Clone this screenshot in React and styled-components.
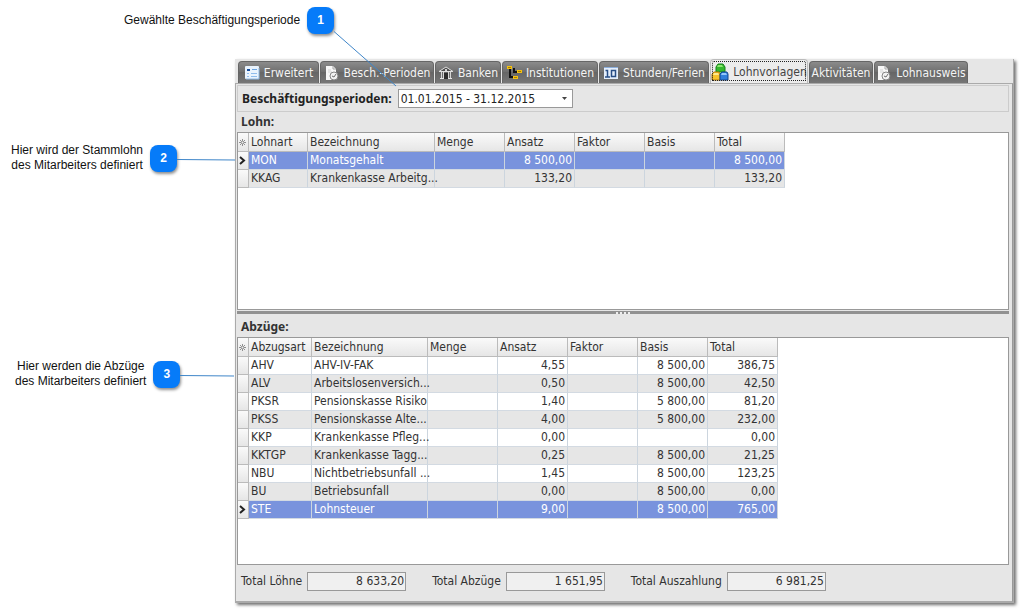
import { useState } from "react"
import styled, { createGlobalStyle } from "styled-components"

// dados

const spaltenLohn = [
    { titel: "Lohnart", breite: 59 },
    { titel: "Bezeichnung", breite: 127 },
    { titel: "Menge", breite: 70 },
    { titel: "Ansatz", breite: 70 },
    { titel: "Faktor", breite: 70 },
    { titel: "Basis", breite: 70 },
    { titel: "Total", breite: 70 },
]

const spaltenAbzuege = [
    { titel: "Abzugsart", breite: 63 },
    { titel: "Bezeichnung", breite: 116 },
    { titel: "Menge", breite: 70 },
    { titel: "Ansatz", breite: 70 },
    { titel: "Faktor", breite: 70 },
    { titel: "Basis", breite: 70 },
    { titel: "Total", breite: 70 },
]

const zeilenLohn = [
    ["MON", "Monatsgehalt", "", "8 500,00", "", "", "8 500,00"],
    ["KKAG", "Krankenkasse Arbeitg...", "", "133,20", "", "", "133,20"],
]

const zeilenAbzuege = [
    ["AHV", "AHV-IV-FAK", "", "4,55", "", "8 500,00", "386,75"],
    ["ALV", "Arbeitslosenversich...", "", "0,50", "", "8 500,00", "42,50"],
    ["PKSR", "Pensionskasse Risiko", "", "1,40", "", "5 800,00", "81,20"],
    ["PKSS", "Pensionskasse Alte...", "", "4,00", "", "5 800,00", "232,00"],
    ["KKP", "Krankenkasse Pfleg...", "", "0,00", "", "", "0,00"],
    ["KKTGP", "Krankenkasse Tagg...", "", "0,25", "", "8 500,00", "21,25"],
    ["NBU", "Nichtbetriebsunfall ...", "", "1,45", "", "8 500,00", "123,25"],
    ["BU", "Betriebsunfall", "", "0,00", "", "8 500,00", "0,00"],
    ["STE", "Lohnsteuer", "", "9,00", "", "8 500,00", "765,00"],
]

const summen = [
    { id: "loehne", titel: "Total Löhne", wert: "8 633,20" },
    { id: "abzuege", titel: "Total Abzüge", wert: "1 651,95" },
    { id: "auszahlung", titel: "Total Auszahlung", wert: "6 981,25" },
]

// icons

function IconListe() {
    return (
        <svg width="16" height="16" viewBox="0 0 16 16">
            <rect x="1" y="1" width="14" height="13" rx="1" fill="#e9f3fd" />
            <path d="M2 14h13V3" stroke="#8fb9e4" fill="none" />
            <path d="M3 4h3v2H3z" fill="#164d9c" />
            <path d="M8 4.500h5" stroke="#6aa3e0" />
            <path d="M3 8.500h2M7 8.500h6M3 11.500h2M7 11.500h6" stroke="#8fbcec" />
        </svg>
    )
}

function IconDokument() {
    return (
        <svg width="16" height="16" viewBox="0 0 16 16">
            <path d="M2 1h7l3 3v11H2z" fill="#f7f7f7" />
            <path d="M9 1v3h3" fill="none" stroke="#a5a5a5" />
            <path d="M4 5h3M4 7h4" stroke="#d5d5d5" />
            <circle cx="10" cy="11" r="4" fill="#f2f2f2" stroke="#858585" />
            <path d="M8 11l2 1 2-3" fill="none" stroke="#6f6f6f" />
        </svg>
    )
}

function IconBank() {
    return (
        <svg width="16" height="16" viewBox="0 0 16 16">
            <path d="M1 6.500L8 2l7 4.500z" fill="#4c4c4c" stroke="#dedede" />
            <circle cx="8" cy="5" r="1" fill="#fff" />
            <path d="M3.500 7v6M5.500 7v6M10.500 7v6M12.500 7v6" stroke="#d5d5d5" />
            <path d="M6 8h4v6H6z" fill="#2b2b2b" />
            <path d="M2 13.500h4M10 13.500h4" stroke="#e5e5e5" />
        </svg>
    )
}

function IconBaum() {
    return (
        <svg width="16" height="16" viewBox="0 0 16 16">
            <path d="M4 4v8h5M8 3v4h5" fill="none" stroke="#111" strokeWidth="2" />
            <rect x="1" y="1" width="5" height="3" fill="#f5c211" />
            <rect x="11" y="5" width="5" height="3" fill="#f5c211" />
            <rect x="7" y="11" width="5" height="3" fill="#f5c211" />
            <path d="M2 2.500h3M12 6.500h3M8 12.500h3" stroke="#a87c00" />
        </svg>
    )
}

function IconKalender() {
    return (
        <svg width="16" height="16" viewBox="0 0 16 16">
            <rect x="1" y="2" width="14" height="12" fill="#e4eefb" />
            <path d="M1 2.500h14" stroke="#8caedb" />
            <path d="M2.500 5.500h2v6M2 12h5" fill="none" stroke="#274d85" strokeWidth="1.500" />
            <rect x="8.500" y="5.500" width="4" height="6" fill="none" stroke="#274d85" strokeWidth="1.500" />
        </svg>
    )
}

function IconBausteine() {
    return (
        <svg width="18" height="18" viewBox="0 0 18 18">
            <path d="M5 4l2-3h5l2 3v5H5z" fill="#35b82d" stroke="#14811a" />
            <path d="M7 2h4l1 2H6z" fill="#8be870" />
            <path d="M1 11l2-2h5l1 2v6H1z" fill="#f8c32b" stroke="#bb7d09" />
            <path d="M3 10h4l1 2H2z" fill="#ffe98f" />
            <path d="M9 11l2-2h5l1 2v6H9z" fill="#317fda" stroke="#12478f" />
            <path d="M11 10h4l1 2h-6z" fill="#92c8fb" />
        </svg>
    )
}

const reiter = [
    { titel: "Erweitert", icon: <IconListe />, breite: 81 },
    { titel: "Besch.-Perioden", icon: <IconDokument />, breite: 114 },
    { titel: "Banken", icon: <IconBank />, breite: 66 },
    { titel: "Institutionen", icon: <IconBaum />, breite: 96 },
    { titel: "Stunden/Ferien", icon: <IconKalender />, breite: 110 },
    { titel: "Lohnvorlagen", icon: <IconBausteine />, breite: 98 },
    { titel: "Aktivitäten", breite: 64 },
    { titel: "Lohnausweis", icon: <IconDokument />, breite: 94 },
]

// componentes

function Hinweis({ nummer, dx, dy, children }) {
    return (
        <HinweisStyle>
            <p>{children}</p>
            <Marke>
                {nummer}
                <Linie width={dx} height={Math.max(dy, 2)} $oben={dy > 2 ? 24 : 14}>
                    <line x1="0" y1="0.5" x2={dx} y2={dy} />
                </Linie>
            </Marke>
        </HinweisStyle>
    )
}

function Tabelle({ name, spalten, zeilen, aktiv, setAktiv }) {
    return (
        <TabelleStyle aria-label={name}>
            <colgroup>
                <col width={11} />
                {spalten.map((spalte) => <col key={spalte.titel} width={spalte.breite} />)}
            </colgroup>
            <thead>
                <tr>
                    <th className="griff">
                        <svg width="7" height="7" viewBox="0 0 7 7">
                            <path d="M3.500 0v7M0 3.500h7M1 1l5 5M6 1l-5 5" stroke="#666" strokeWidth="0.7" />
                            <circle cx="3.500" cy="3.500" r="1" fill="#eee" />
                        </svg>
                    </th>
                    {spalten.map((spalte) => <th key={spalte.titel}>{spalte.titel}</th>)}
                </tr>
            </thead>
            <tbody>
                {zeilen.map((zeile, index) => (
                    <Zeile key={zeile[0]} $aktiv={index === aktiv} onClick={() => setAktiv(index)}>
                        <td className="griff">
                            {index === aktiv && (
                                <svg width="7" height="9" viewBox="0 0 7 9">
                                    <path d="M1 1l4 3.500-4 3.500" fill="none" stroke="#222" strokeWidth="2" />
                                </svg>
                            )}
                        </td>
                        {zeile.map((wert, i) => <td key={i} className={i > 1 ? "zahl" : ""}>{wert}</td>)}
                    </Zeile>
                ))}
            </tbody>
        </TabelleStyle>
    )
}

export default function App() {

    // states
    const [reiterAktiv, setReiterAktiv] = useState(5)
    const [lohnAktiv, setLohnAktiv] = useState(0)
    const [abzugAktiv, setAbzugAktiv] = useState(8)

    return (
        <Seite>
            <GlobalStyle />
            <Kopf>
                <Hinweis nummer={1} dx={62} dy={55}>Gewählte Beschäftigungsperiode</Hinweis>
            </Kopf>
            <Inhalt>
                <Randspalte>
                    <Hinweis nummer={2} dx={58} dy={1}>Hier wird der Stammlohn<br />des Mitarbeiters definiert</Hinweis>
                    <Hinweis nummer={3} dx={54} dy={1}>Hier werden die Abzüge<br />des Mitarbeiters definiert</Hinweis>
                </Randspalte>
                <Fenster>
                    <Reiterleiste role="tablist">
                        {reiter.map(({ titel, icon, breite }, index) => (
                            <Reiter
                                key={titel}
                                role="tab"
                                aria-selected={index === reiterAktiv}
                                $aktiv={index === reiterAktiv}
                                $breite={breite}
                                onClick={() => setReiterAktiv(index)}
                            >
                                {icon}
                                <span>{titel}</span>
                            </Reiter>
                        ))}
                    </Reiterleiste>
                    <Blatt>
                        <Periode>
                            <label htmlFor="periode">Beschäftigungsperioden:</label>
                            <Auswahl>
                                <select id="periode">
                                    <option>01.01.2015 - 31.12.2015</option>
                                </select>
                                <svg width="5" height="3" viewBox="0 0 5 3"><path d="M0 0h5L2.500 3z" fill="#444" /></svg>
                            </Auswahl>
                        </Periode>
                        <Titel>Lohn:</Titel>
                        <Rahmen $anteil={179}>
                            <Tabelle name="Lohn" spalten={spaltenLohn} zeilen={zeilenLohn} aktiv={lohnAktiv} setAktiv={setLohnAktiv} />
                        </Rahmen>
                        <Teiler><i /><i /><i /><i /></Teiler>
                        <Titel>Abzüge:</Titel>
                        <Rahmen $anteil={229}>
                            <Tabelle name="Abzüge" spalten={spaltenAbzuege} zeilen={zeilenAbzuege} aktiv={abzugAktiv} setAktiv={setAbzugAktiv} />
                        </Rahmen>
                        <Summen>
                            {summen.map(({ id, titel, wert }) => (
                                <Summe key={id}>
                                    <label htmlFor={id}>{titel}</label>
                                    <input id={id} value={wert} readOnly />
                                </Summe>
                            ))}
                        </Summen>
                    </Blatt>
                </Fenster>
            </Inhalt>
        </Seite>
    )
}

const GlobalStyle = createGlobalStyle`
    *{
        box-sizing: border-box;
    }

    body{
        margin: 0;
        background-color: white;
        color: #333;
        font-family: "DejaVu Sans Condensed", "DejaVu Sans", sans-serif;
        font-size: 12px;
    }

    button, input, select{
        font: inherit;
        color: inherit;
    }

    p, h2{
        margin: 0;
    }
`

const Seite = styled.div`
    display: flex;
    flex-direction: column;
    min-height: 100vh;
    padding: 0 10px 8px 0;
`

const Kopf = styled.header`
    height: 59px;
    padding: 7px 0 0 124px;
`

const Inhalt = styled.div`
    display: flex;
    flex: 1;
`

const Randspalte = styled.aside`
    display: flex;
    flex-direction: column;
    gap: 186px;
    width: 235px;
    padding: 84px 0 0 11px;

    div + div{
        padding-left: 4px;
    }
`

const HinweisStyle = styled.div`
    display: flex;
    align-items: center;
    gap: 7px;
    color: #111;
    font-family: "Liberation Sans", Arial, sans-serif;
    font-size: 12px;
    line-height: 15px;
    text-align: center;
    white-space: nowrap;
`

const Marke = styled.span`
    position: relative;
    display: flex;
    align-items: center;
    justify-content: center;
    width: 27px;
    height: 27px;
    border-radius: 8px;
    background-color: #067bf9;
    box-shadow: 1px 2px 3px #00000070;
    color: white;
    font-weight: 700;
`

const Linie = styled.svg`
    position: absolute;
    z-index: 1;
    left: 100%;
    top: ${({ $oben }) => $oben}px;
    overflow: visible;
    stroke: #3f86c9;
    pointer-events: none;
`

const Fenster = styled.main`
    display: flex;
    flex-direction: column;
    flex: 1;
    min-width: 0;
    background-color: #e6e6e6;
    border-right: 1px solid #aaa;
    border-bottom: 1px solid #aaa;
    box-shadow: 2px 2px 3px #00000090;
`

const Reiterleiste = styled.div`
    display: flex;
    align-items: flex-end;
    gap: 1px;
    height: 24px;
    padding-left: 3px;
`

const Reiter = styled.button`
    display: flex;
    align-items: center;
    justify-content: center;
    gap: 4px;
    width: ${({ $breite }) => $breite}px;
    height: ${({ $aktiv }) => ($aktiv ? 24 : 22)}px;
    padding: 0;
    border: 1px solid ${({ $aktiv }) => ($aktiv ? "#bbb" : "#666")};
    border-bottom: none;
    border-radius: 4px 4px 0 0;
    background: ${({ $aktiv }) => ($aktiv ? "#ececec" : "linear-gradient(#8b8b8b, #707070 45%, #666 50%, #777)")};
    color: ${({ $aktiv }) => ($aktiv ? "#444" : "#f4f4f4")};
    outline: ${({ $aktiv }) => ($aktiv ? "1px dotted #222" : "none")};
    outline-offset: -3px;
    white-space: nowrap;

    svg{
        flex: none;
    }
`

const Blatt = styled.section`
    display: flex;
    flex-direction: column;
    flex: 1;
    padding: 1px 3px 0 1px;
    border: 1px solid #aaa;
    border-right-color: #999;
`

const Periode = styled.div`
    display: flex;
    align-items: center;
    gap: 6px;
    height: 27px;
    padding-left: 4px;
    border: 1px solid #ccc;
    color: #222;

    label{
        font-family: "Noto Sans", sans-serif;
        font-weight: 700;
    }
`

const Auswahl = styled.div`
    display: grid;
    align-items: center;
    width: 175px;

    select, svg{
        grid-area: 1 / 1;
    }

    select{
        appearance: none;
        height: 19px;
        padding: 0 2px;
        border: 1px solid #999;
        border-radius: 0;
        background-color: white;
    }

    svg{
        justify-self: end;
        margin-right: 6px;
        pointer-events: none;
    }
`

const Titel = styled.h2`
    padding: 0 4px;
    font-family: "Noto Sans", sans-serif;
    font-size: 12px;
    line-height: 20px;
`

const Rahmen = styled.div`
    flex: ${({ $anteil }) => $anteil} 0 0;
    border: 1px solid #999;
    background-color: white;
`

const Teiler = styled.div`
    display: flex;
    align-items: center;
    justify-content: center;
    gap: 2px;
    height: 3px;
    margin: 1px 0 3px;
    background-color: #919191;

    i{
        width: 2px;
        height: 2px;
        background-color: #eee;
    }
`

const TabelleStyle = styled.table`
    table-layout: fixed;
    width: 0;
    border-collapse: separate;
    border-spacing: 0;
    line-height: 17px;
    white-space: nowrap;

    th, td{
        height: 18px;
        padding: 0 2px;
        border-right: 1px solid #ccd5de;
        border-bottom: 1px solid #d3dae2;
        font-weight: 400;
        text-align: left;
    }

    th{
        height: 19px;
        border-color: #bbb;
        background: linear-gradient(#fafafa, #e6e6e6);
    }

    .zahl{
        text-align: right;
    }

    .griff{
        padding: 0 1px;
        border-color: #bbb;
        background: linear-gradient(#fafafa, #e6e6e6);
    }

    .griff svg{
        display: block;
    }
`

const Zeile = styled.tr`
    background-color: ${({ $aktiv }) => ($aktiv ? "#7993dd" : "white")};
    color: ${({ $aktiv }) => ($aktiv ? "white" : "#333")};

    &:nth-child(even){
        background-color: ${({ $aktiv }) => ($aktiv ? "#7993dd" : "#e6e6e6")};
    }
`

const Summen = styled.div`
    display: flex;
    gap: 26px;
    height: 36px;
    padding: 6px 4px;
`

const Summe = styled.div`
    display: flex;
    align-items: center;
    gap: 5px;
    height: 20px;

    input{
        width: 99px;
        height: 19px;
        padding: 0 1px;
        border: 1px solid #999;
        background-color: #f0f0f0;
        text-align: right;
    }
`
